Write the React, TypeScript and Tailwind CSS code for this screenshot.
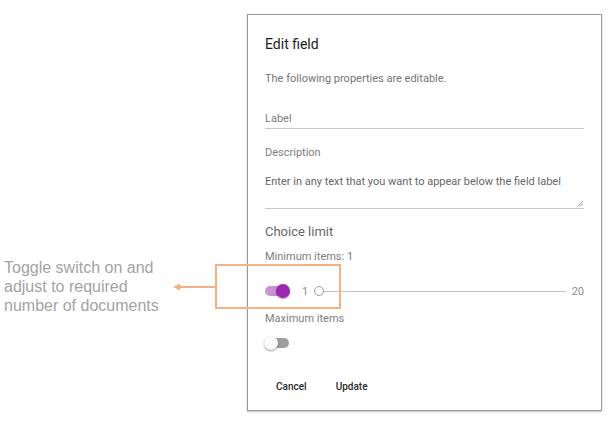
import { useState } from 'react';

const roboto = { fontFamily: 'Roboto, "Noto Sans", sans-serif' };

function Toggle({ on }: { on: boolean }) {
  return (
    <div className="relative h-[14px] w-[24px]">
      <div
        className={
          on
            ? 'absolute left-0 top-[2px] h-[10px] w-[22px] rounded-full bg-[#ce8fd6]'
            : 'absolute left-0 top-[2px] h-[10px] w-[24px] rounded-full bg-[#9e9e9e]'
        }
      />
      <div
        className={
          on
            ? 'absolute left-[11px] top-0 h-[14px] w-[14px] rounded-full bg-[#9c27b0] shadow-[0_1px_2px_rgba(0,0,0,0.35)]'
            : 'absolute -left-[1px] top-0 h-[14px] w-[14px] rounded-full bg-[#fafafa] shadow-[0_1px_2px_rgba(0,0,0,0.4)]'
        }
      />
    </div>
  );
}

export default function App() {
  const [minOn] = useState(true);

  return (
    <div className="relative h-[444px] w-[609px] bg-white">
      {/* annotation */}
      <p
        className="absolute left-[4px] top-[258px] w-[170px] text-[16px] leading-[19px] text-[#a3a3a3]"
        style={{ fontFamily: '"Liberation Sans", Arial, sans-serif' }}
      >
        Toggle switch on and adjust to required number of documents
      </p>

      <div className="ml-[247px] pt-[14px]">
        <div
          className="flex h-[397px] w-[355px] flex-col border border-[#9a9a9a] bg-white px-[17px] shadow-[0_1px_2px_rgba(0,0,0,0.25)]"
          style={roboto}
        >
          <h2 className="mt-[21px] text-[14px] font-normal leading-[16px] text-[#1a1a1a]">Edit field</h2>
          <p className="mt-[20px] text-[11px] leading-[13px] text-[#757575]">
            The following properties are editable.
          </p>

          <div className="mt-[27px] border-b border-[#c8c8c8] pb-[3px] text-[11px] leading-[13px] text-[#7d7d7d]">
            Label
          </div>

          <div className="mt-[17px] text-[11px] leading-[13px] text-[#7d7d7d]">Description</div>
          <div className="relative mt-[16px] border-b border-[#c8c8c8] pb-[20px] text-[11px] leading-[13px] text-[#666]">
            Enter in any text that you want to appear below the field label
            <svg className="absolute bottom-[2px] right-[1px]" width="6" height="6" viewBox="0 0 6 6">
              <path d="M1 6 L6 1 M3.5 6 L6 3.5" stroke="#888" strokeWidth="0.8" />
            </svg>
          </div>

          <div className="mt-[15px] text-[13px] leading-[15px] text-[#666]">Choice limit</div>
          <div className="mt-[11px] text-[11px] leading-[13px] text-[#7d7d7d]">Minimum items: 1</div>

          <div className="mt-[21px] flex items-center">
            <Toggle on={minOn} />
            <span className="ml-[13px] text-[11px] leading-[13px] text-[#8a8a8a]">1</span>
            <div className="ml-[6px] flex flex-1 items-center">
              <div className="h-[10px] w-[10px] rounded-full border border-[#9e9e9e] bg-white" />
              <div className="h-px flex-1 bg-[#c4c4c4]" />
            </div>
            <span className="ml-[6px] text-[11px] leading-[13px] text-[#8a8a8a]">20</span>
          </div>

          <div className="mt-[14px] text-[11px] leading-[13px] text-[#7d7d7d]">Maximum items</div>
          <div className="mt-[11px]">
            <Toggle on={false} />
          </div>

          <div className="mt-[31px] flex gap-[29px] pl-[11px] text-[10px] font-medium leading-[12px] text-[#2a2a2a]">
            <span>Cancel</span>
            <span>Update</span>
          </div>
        </div>
      </div>

      {/* callout box and arrow */}
      <div className="absolute left-[215px] top-[264px] h-[45px] w-[126px] border-2 border-[#f4b183]" />
      <svg className="absolute left-[170px] top-[281px]" width="46" height="12" viewBox="0 0 46 12">
        <path d="M46 6 H6" stroke="#f4b183" strokeWidth="2" />
        <path d="M3 6 L10 2.5 L10 9.5 Z" fill="#f4b183" />
      </svg>
    </div>
  );
}
